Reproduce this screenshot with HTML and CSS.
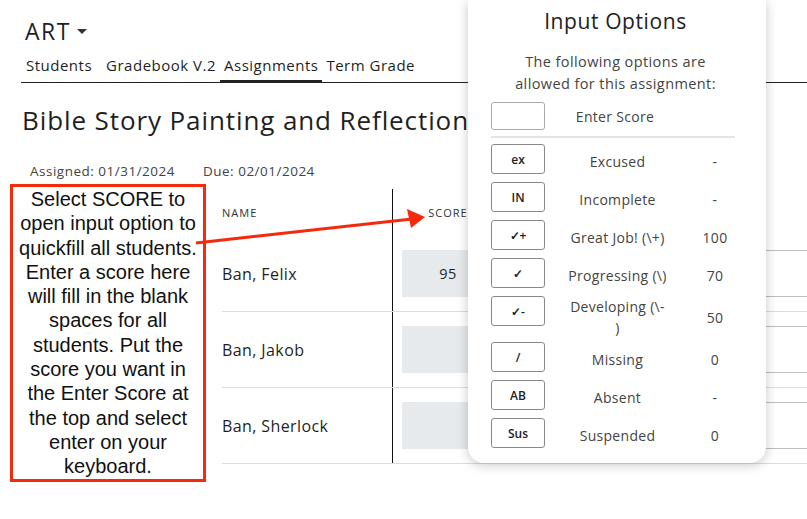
FILE: index.html
```html
<!DOCTYPE html>
<html lang="en">
<head>
  <meta charset="UTF-8">
  <title>ART - Assignments</title>
  <link rel="stylesheet" href="styles.css">
</head>
<body>
  <div class="page">
    <header class="course">
      <div class="course-title">ART <span class="caret"></span></div>
      <nav class="tabs">
        <a class="tab tab-first">Students</a>
        <a class="tab">Gradebook V.2</a>
        <a class="tab active">Assignments</a>
        <a class="tab">Term Grade</a>
      </nav>
    </header>

    <h1 class="assignment">Bible Story Painting and Reflection</h1>
    <div class="dates">
      <span>Assigned: 01/31/2024</span>
      <span>Due: 02/01/2024</span>
    </div>

    <div class="grade-area">
      <div class="callout">
        Select SCORE to open input option to quickfill all students. Enter a score here will fill in the blank spaces for all students. Put the score you want in the Enter Score at the top and select enter on your keyboard.
      </div>

      <table class="roster">
        <thead>
          <tr>
            <th class="col-name">NAME</th>
            <th class="col-score">SCORE</th>
            <th class="col-comment"></th>
          </tr>
        </thead>
        <tbody>
          <tr>
            <td class="col-name">Ban, Felix</td>
            <td class="col-score"><div class="score-box">95</div></td>
            <td class="col-comment"><div class="comment-box"></div></td>
          </tr>
          <tr>
            <td class="col-name">Ban, Jakob</td>
            <td class="col-score"><div class="score-box"></div></td>
            <td class="col-comment"><div class="comment-box"></div></td>
          </tr>
          <tr>
            <td class="col-name">Ban, Sherlock</td>
            <td class="col-score"><div class="score-box"></div></td>
            <td class="col-comment"><div class="comment-box"></div></td>
          </tr>
        </tbody>
      </table>
    </div>

    <svg class="arrow" width="807" height="519" viewBox="0 0 807 519">
      <line x1="196" y1="243" x2="412" y2="219" stroke="#f52a0c" stroke-width="3"/>
      <polygon points="425,217 407,209 411,228" fill="#f52a0c"/>
    </svg>

    <div class="popup">
      <h2 class="popup-title">Input Options</h2>
      <p class="popup-note">The following options are allowed for this assignment:</p>

      <div class="option entry">
        <div class="opt-key opt-input"></div>
        <div class="opt-label">Enter Score</div>
        <div class="opt-value"></div>
      </div>

      <div class="options">
        <div class="option">
          <div class="opt-key">ex</div>
          <div class="opt-label">Excused</div>
          <div class="opt-value">-</div>
        </div>
        <div class="option">
          <div class="opt-key">IN</div>
          <div class="opt-label">Incomplete</div>
          <div class="opt-value">-</div>
        </div>
        <div class="option">
          <div class="opt-key">&#10003;+</div>
          <div class="opt-label">Great Job! (\+)</div>
          <div class="opt-value">100</div>
        </div>
        <div class="option">
          <div class="opt-key">&#10003;</div>
          <div class="opt-label">Progressing (\)</div>
          <div class="opt-value">70</div>
        </div>
        <div class="option">
          <div class="opt-key">&#10003;-</div>
          <div class="opt-label">Developing (\-<br>)</div>
          <div class="opt-value">50</div>
        </div>
        <div class="option">
          <div class="opt-key">/</div>
          <div class="opt-label">Missing</div>
          <div class="opt-value">0</div>
        </div>
        <div class="option">
          <div class="opt-key">AB</div>
          <div class="opt-label">Absent</div>
          <div class="opt-value">-</div>
        </div>
        <div class="option">
          <div class="opt-key">Sus</div>
          <div class="opt-label">Suspended</div>
          <div class="opt-value">0</div>
        </div>
      </div>
    </div>
  </div>
</body>
</html>
```

FILE: styles.css
```css
body {
  margin: 0;
  background: #ffffff;
  font-family: "Open Sans", "Noto Sans", sans-serif;
  color: #1f1f1f;
}

.page {
  position: relative;
  width: 807px;
  height: 519px;
  overflow: hidden;
}

/* header + tabs */
.course {
  padding-top: 15px;
}

.course-title {
  margin-left: 25px;
  font-size: 23px;
  letter-spacing: 1.5px;
  line-height: 32px;
  display: flex;
  align-items: center;
  gap: 6px;
}

.caret {
  width: 0;
  height: 0;
  border-left: 5px solid transparent;
  border-right: 5px solid transparent;
  border-top: 5px solid #333;
}

.tabs {
  display: flex;
  margin-left: 21px;
  margin-top: 8px;
  border-bottom: 1px solid #222;
}

.tab {
  font-size: 15px;
  letter-spacing: 0.5px;
  line-height: 20px;
  padding: 0 4px 5px;
  border-bottom: 3px solid transparent;
  margin-bottom: -1px;
}

.tab-first {
  padding-left: 5px;
  padding-right: 10px;
}

.tab.active {
  border-bottom-color: #222;
}

/* assignment title */
.assignment {
  margin: 20px 0 0 22px;
  font-size: 26px;
  font-weight: 400;
  letter-spacing: 0.9px;
  line-height: 34px;
  white-space: nowrap;
}

.dates {
  display: flex;
  gap: 28px;
  margin: 25px 0 0 30px;
  font-size: 13.5px;
  letter-spacing: 0.5px;
  line-height: 18px;
  color: #444;
}

/* grade table */
.grade-area {
  display: flex;
  align-items: flex-start;
  margin-top: 4px;
  margin-left: 10px;
}

.callout {
  width: 184px;
  padding: 0 3px;
  border: 3px solid #f52a0c;
  font-family: "Liberation Sans", Arial, sans-serif;
  font-size: 20px;
  line-height: 24.3px;
  text-align: center;
  color: #111;
  flex-shrink: 0;
}

.roster {
  margin-top: 5px;
  margin-left: 16px;
  border-collapse: collapse;
  flex-shrink: 0;
}

.roster th {
  height: 47px;
  padding: 0;
  font-size: 11px;
  font-weight: 400;
  letter-spacing: 1px;
  color: #333;
}

.roster td {
  padding: 14px 9px;
  border-bottom: 1px solid #dcdcdc;
}

.roster .col-name {
  width: 161px;
  padding-left: 0;
  text-align: left;
  font-size: 16px;
  letter-spacing: 0.4px;
}

.roster th.col-name {
  font-size: 11px;
  letter-spacing: 1px;
}

.roster .col-score {
  width: 92px;
  border-left: 1px solid #111;
  text-align: center;
}

.roster .col-comment {
  width: 300px;
  border-left: 1px solid #111;
}

.score-box {
  height: 47px;
  background: #e6eaed;
  display: flex;
  align-items: center;
  justify-content: center;
  font-size: 14.5px;
  letter-spacing: 0.5px;
}

.comment-box {
  height: 47px;
  box-sizing: border-box;
  border: 1px solid #bdbdbd;
  margin-left: 190px;
}

.arrow {
  position: absolute;
  left: 0;
  top: 0;
  pointer-events: none;
}

/* input options popover */
.popup {
  position: absolute;
  left: 468px;
  top: 0;
  width: 298px;
  height: 463px;
  box-sizing: border-box;
  padding: 0 26px 0 23px;
  background: #ffffff;
  border-radius: 0 0 16px 16px;
  box-shadow: 0 2px 12px rgba(0, 0, 0, 0.22);
  color: #444;
}

.popup-title {
  margin: 7px 0 0;
  font-size: 21px;
  font-weight: 400;
  letter-spacing: 0.6px;
  line-height: 28px;
  text-align: center;
  color: #222;
}

.popup-note {
  margin: 16px 0 0;
  padding: 0 17px;
  font-size: 14.5px;
  letter-spacing: 0.4px;
  line-height: 22px;
  text-align: center;
}

.option {
  display: grid;
  grid-template-columns: 54px 1fr 50px;
  align-items: center;
  min-height: 34px;
  font-size: 14px;
  letter-spacing: 0.3px;
}

.option.entry {
  margin-top: 7px;
  min-height: 28px;
  padding-bottom: 6px;
  border-bottom: 2px solid #e4e4e4;
  margin-right: 5px;
}

.options {
  margin-top: 6px;
  display: flex;
  flex-direction: column;
  gap: 4px;
}

.opt-key {
  align-self: start;
  height: 30px;
  box-sizing: border-box;
  border: 1px solid #8a8a8a;
  border-radius: 3px;
  display: flex;
  align-items: center;
  justify-content: center;
  font-size: 12px;
  font-weight: 600;
  letter-spacing: 0;
  color: #222;
}

.opt-input {
  height: 28px;
  border-color: #aaa;
  align-self: center;
}

.opt-label {
  max-width: 130px;
  margin: 0 auto;
  line-height: 21px;
  text-align: center;
}

.opt-value {
  text-align: center;
}
```
